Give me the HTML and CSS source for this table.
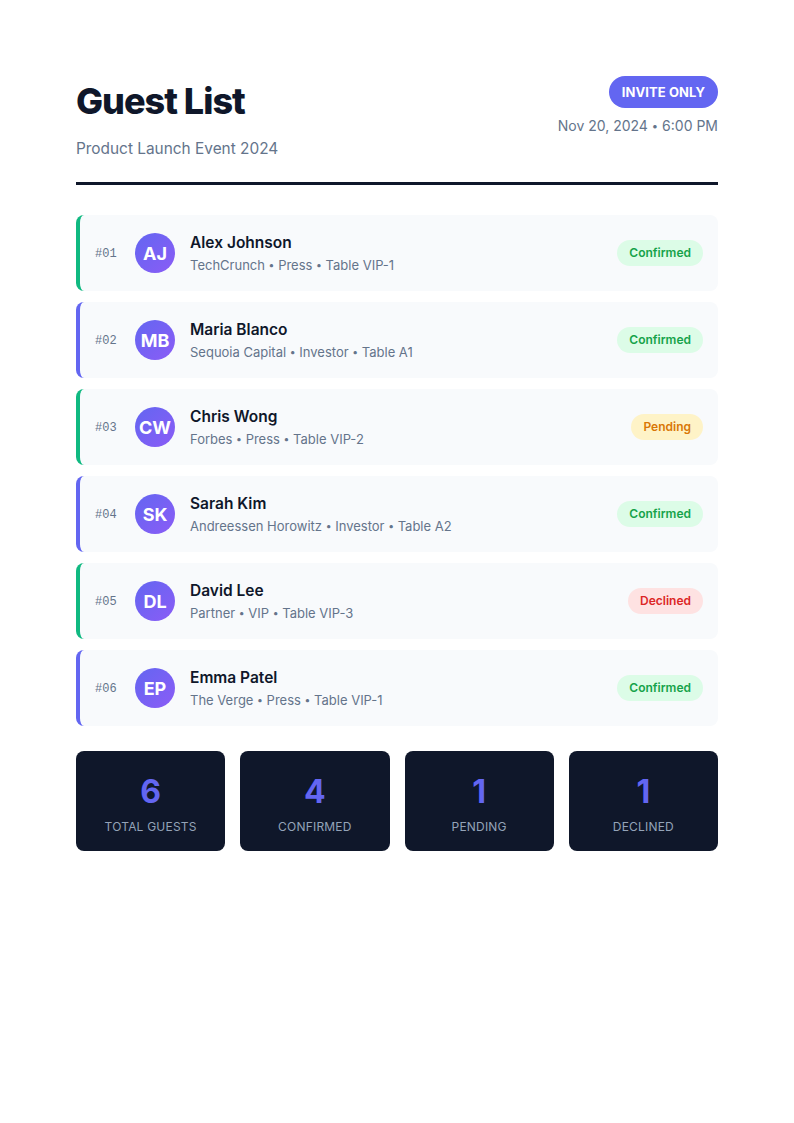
FILE: index.html
```html
<!DOCTYPE html>
<html lang="en">
<head>
<meta charset="utf-8">
<title>Guest List</title>
<link rel="stylesheet" href="styles.css">
</head>
<body>
<div class="page">
  <header class="header">
    <div class="header-left">
      <h1 class="title">Guest List</h1>
      <p class="subtitle">Product Launch Event 2024</p>
    </div>
    <div class="header-right">
      <span class="invite">INVITE ONLY</span>
      <span class="date">Nov 20, 2024 <span class="sep">•</span> 6:00 PM</span>
    </div>
  </header>

  <ul class="list">
    <li class="row accent-green">
      <span class="num">#01</span>
      <span class="avatar">AJ</span>
      <div class="info">
        <div class="name">Alex Johnson</div>
        <div class="meta">TechCrunch <span class="sep">•</span> Press <span class="sep">•</span> Table VIP-1</div>
      </div>
      <span class="status confirmed">Confirmed</span>
    </li>
    <li class="row accent-indigo">
      <span class="num">#02</span>
      <span class="avatar">MB</span>
      <div class="info">
        <div class="name">Maria Blanco</div>
        <div class="meta">Sequoia Capital <span class="sep">•</span> Investor <span class="sep">•</span> Table A1</div>
      </div>
      <span class="status confirmed">Confirmed</span>
    </li>
    <li class="row accent-green">
      <span class="num">#03</span>
      <span class="avatar">CW</span>
      <div class="info">
        <div class="name">Chris Wong</div>
        <div class="meta">Forbes <span class="sep">•</span> Press <span class="sep">•</span> Table VIP-2</div>
      </div>
      <span class="status pending">Pending</span>
    </li>
    <li class="row accent-indigo">
      <span class="num">#04</span>
      <span class="avatar">SK</span>
      <div class="info">
        <div class="name">Sarah Kim</div>
        <div class="meta">Andreessen Horowitz <span class="sep">•</span> Investor <span class="sep">•</span> Table A2</div>
      </div>
      <span class="status confirmed">Confirmed</span>
    </li>
    <li class="row accent-green">
      <span class="num">#05</span>
      <span class="avatar">DL</span>
      <div class="info">
        <div class="name">David Lee</div>
        <div class="meta">Partner <span class="sep">•</span> VIP <span class="sep">•</span> Table VIP-3</div>
      </div>
      <span class="status declined">Declined</span>
    </li>
    <li class="row accent-indigo">
      <span class="num">#06</span>
      <span class="avatar">EP</span>
      <div class="info">
        <div class="name">Emma Patel</div>
        <div class="meta">The Verge <span class="sep">•</span> Press <span class="sep">•</span> Table VIP-1</div>
      </div>
      <span class="status confirmed">Confirmed</span>
    </li>
  </ul>

  <section class="stats">
    <div class="stat"><div class="stat-num">6</div><div class="stat-label">Total Guests</div></div>
    <div class="stat"><div class="stat-num">4</div><div class="stat-label">Confirmed</div></div>
    <div class="stat"><div class="stat-num">1</div><div class="stat-label">Pending</div></div>
    <div class="stat"><div class="stat-num">1</div><div class="stat-label">Declined</div></div>
  </section>
</div>
</body>
</html>
```

FILE: styles.css
```css
* { box-sizing: border-box; }

html, body {
  margin: 0;
  padding: 0;
  background: #ffffff;
}

body {
  font-family: Inter, "Noto Sans", "Liberation Sans", sans-serif;
  color: #0f172a;
}

.page {
  padding: 76px 76px;
}

.header {
  display: flex;
  justify-content: space-between;
  align-items: flex-start;
  padding-bottom: 22px;
  border-bottom: 3px solid #0f172a;
}

.header-left {
  padding-top: 4px;
}

.title {
  margin: 0;
  font-size: 36px;
  line-height: 43px;
  font-weight: 800;
  letter-spacing: -1px;
  color: #0f172a;
}

.subtitle {
  margin: 14px 0 0;
  font-size: 15.4px;
  line-height: 23px;
  color: #64748b;
}

.header-right {
  display: flex;
  flex-direction: column;
  align-items: flex-end;
  gap: 8px;
}

.invite {
  display: inline-block;
  background: #6366f1;
  color: #ffffff;
  font-size: 13px;
  font-weight: 700;
  letter-spacing: 0.1px;
  line-height: 32px;
  height: 32px;
  padding: 0 13px;
  border-radius: 16px;
}

.date {
  font-size: 14px;
  line-height: 20px;
  color: #64748b;
}

.sep {
  font-size: 0.8em;
  vertical-align: 1px;
}

.list {
  list-style: none;
  margin: 30px 0 0;
  padding: 0;
  display: flex;
  flex-direction: column;
  gap: 11px;
}

.row {
  display: flex;
  align-items: center;
  height: 76px;
  padding: 0 15px 0 15px;
  background: #f8fafc;
  border-radius: 8px;
  border-left: 4px solid #10b981;
}

.accent-green { border-left-color: #10b981; }
.accent-indigo { border-left-color: #6366f1; }

.num {
  width: 40px;
  font-family: "Liberation Mono", "DejaVu Sans Mono", monospace;
  font-size: 12px;
  color: #64748b;
  padding-top: 1px;
}

.avatar {
  flex: none;
  width: 40px;
  height: 40px;
  border-radius: 50%;
  background: linear-gradient(135deg, #6366f1, #8b5cf6);
  color: #ffffff;
  font-size: 18px;
  font-weight: 700;
  display: flex;
  align-items: center;
  justify-content: center;
  margin-right: 15px;
}

.info {
  flex: 1;
  display: flex;
  flex-direction: column;
  gap: 3px;
  padding-top: 2px;
}

.name {
  font-size: 15.5px;
  line-height: 20px;
  font-weight: 600;
  color: #0f172a;
}

.meta {
  font-size: 13px;
  line-height: 18px;
  color: #64748b;
}

.status {
  font-size: 12px;
  font-weight: 600;
  line-height: 26px;
  height: 26px;
  padding: 0 12px;
  border-radius: 13px;
}

.confirmed { background: #dcfce7; color: #16a34a; }
.pending { background: #fef3c7; color: #d97706; }
.declined { background: #fee2e2; color: #dc2626; }

.stats {
  margin-top: 25px;
  display: grid;
  grid-template-columns: repeat(4, 1fr);
  gap: 15px;
}

.stat {
  background: #0f172a;
  border-radius: 8px;
  height: 100px;
  display: flex;
  flex-direction: column;
  align-items: center;
  justify-content: center;
  gap: 2px;
}

.stat-num {
  font-size: 32px;
  line-height: 50px;
  font-weight: 700;
  color: #6366f1;
}

.stat-label {
  font-size: 12px;
  line-height: 16px;
  text-transform: uppercase;
  color: #94a3b8;
  letter-spacing: 0.2px;
}
```
